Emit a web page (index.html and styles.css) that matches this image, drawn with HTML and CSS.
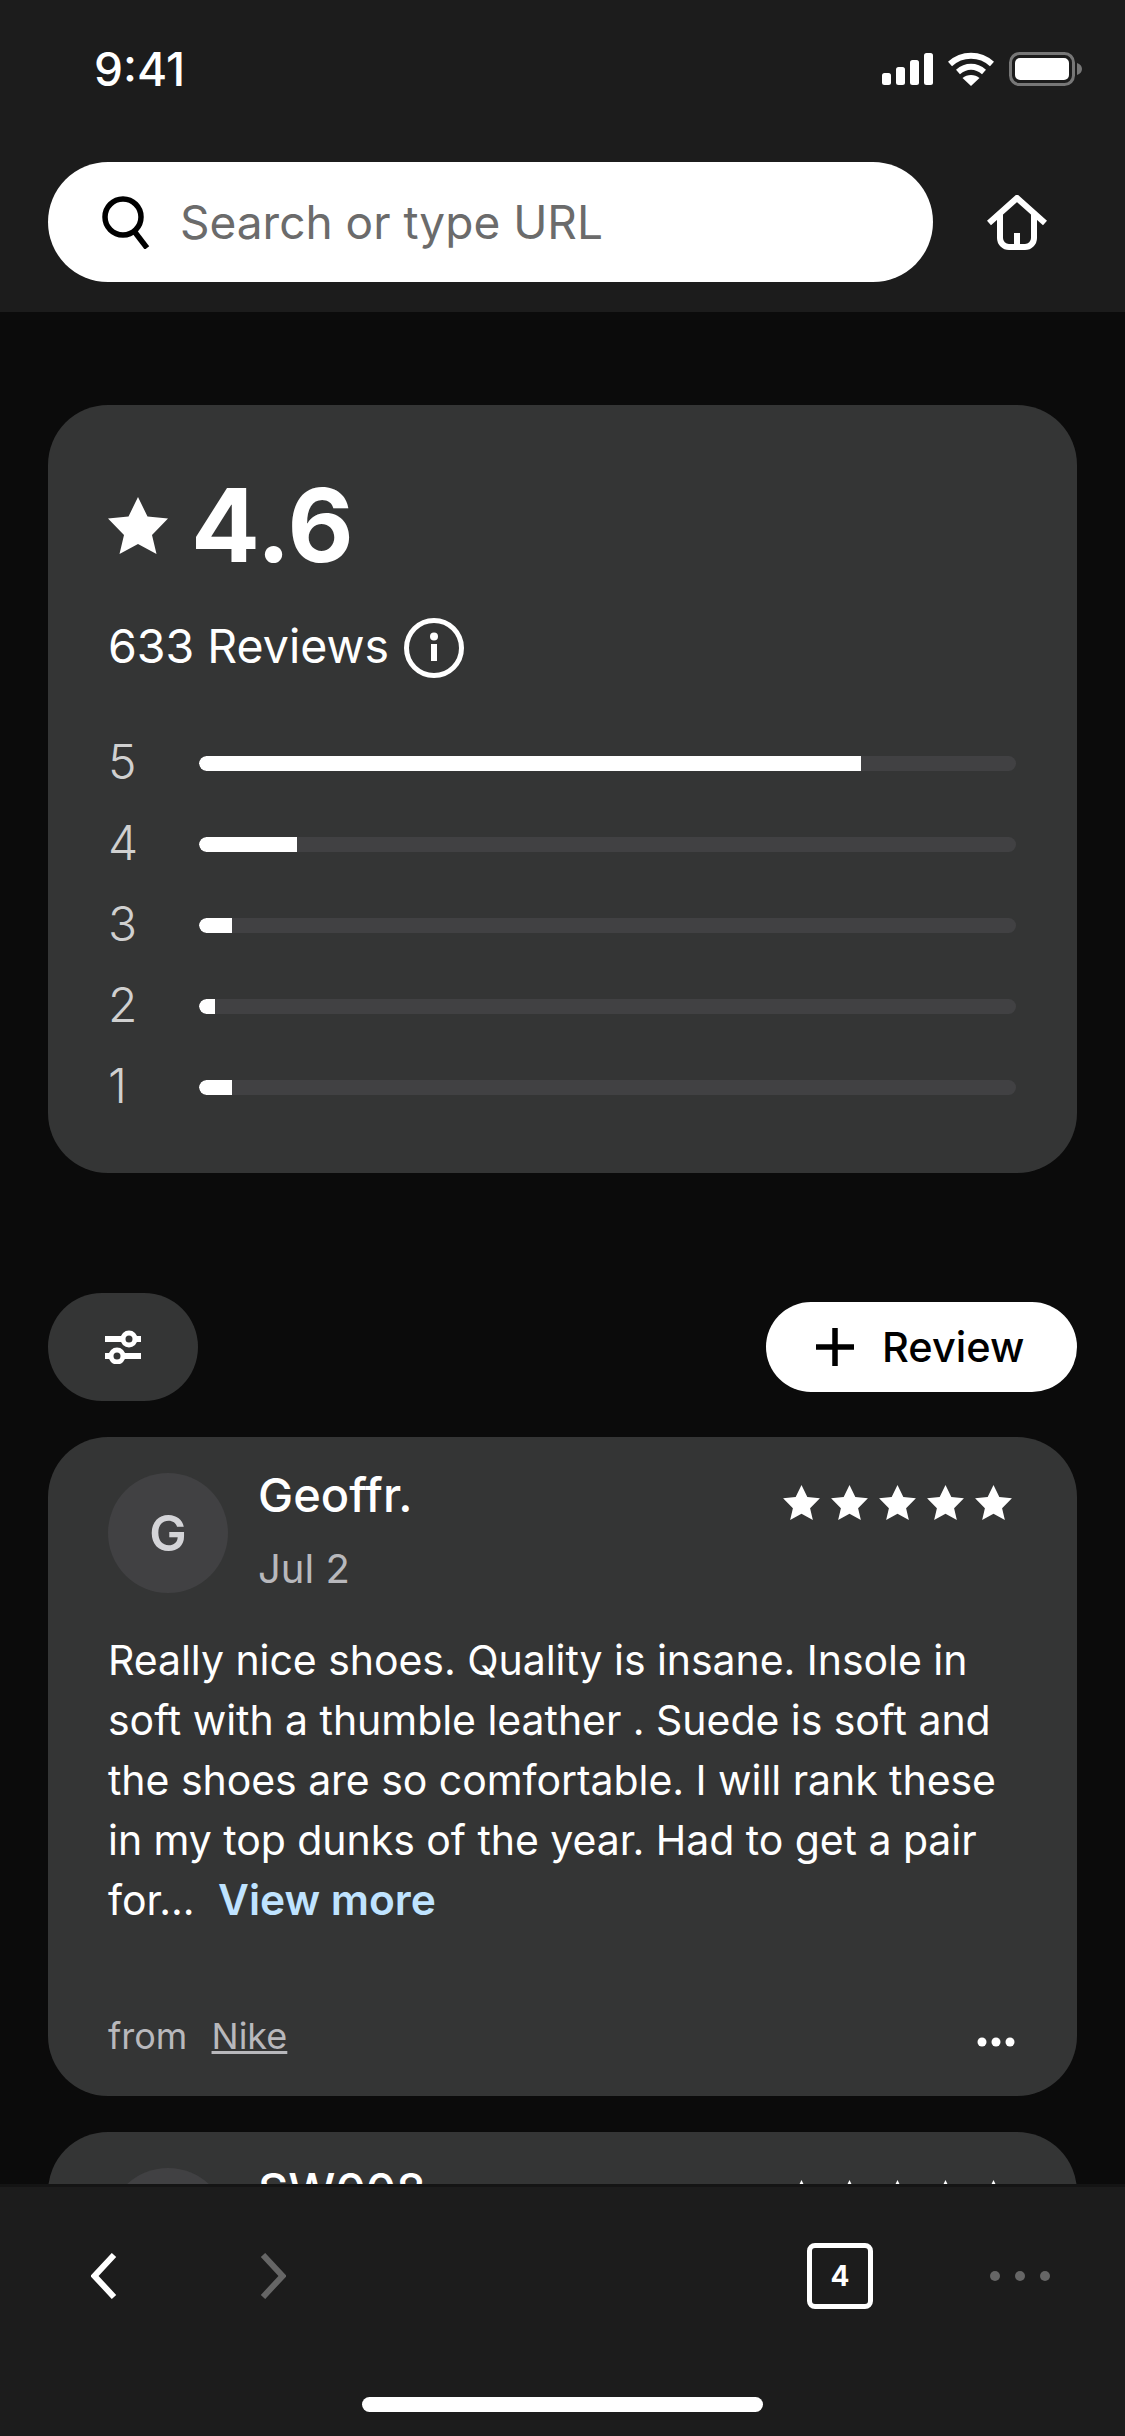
FILE: index.html
```html
<!DOCTYPE html>
<html lang="en">
<head>
    <meta charset="UTF-8">
    <meta name="viewport" content="width=device-width, initial-scale=1.0">
    <title>Reviews</title>
    <link rel="stylesheet" href="styles.css">
</head>
<body>
    <svg class="defs">
        <symbol id="star" viewBox="0 0 60 57">
            <path d="M30 0L39.5 19.5L60 21.5L44 38L48.5 57L30 47L11.5 57L16 38L0 21.5L20.5 19.5Z" fill="#fff"/>
        </symbol>
    </svg>

    <header class="top-bar">
        <div class="status-bar">
            <span class="time">9:41</span>
            <div class="status-icons">
                <svg width="51" height="32" viewBox="0 0 51 32" fill="#fff">
                    <rect x="0" y="20" width="9" height="12" rx="2.5"/>
                    <rect x="14" y="14" width="9" height="18" rx="2.5"/>
                    <rect x="28" y="7" width="9" height="25" rx="2.5"/>
                    <rect x="42" y="0" width="9" height="32" rx="2.5"/>
                </svg>
                <svg width="46" height="34" viewBox="0 0 46 34" fill="none" stroke="#fff" stroke-width="6">
                    <path d="M2 12C14 1 32 1 44 12"/>
                    <path d="M10 20C18 13 28 13 36 20"/>
                    <path d="M23 34L14.5 26C19 22 27 22 31.5 26Z" fill="#fff" stroke="none"/>
                </svg>
                <svg width="73" height="34" viewBox="0 0 73 34">
                    <rect x="1.5" y="1.5" width="63" height="31" rx="9" fill="none" stroke="#777" stroke-width="3"/>
                    <rect x="6" y="6" width="54" height="22" rx="5" fill="#fff"/>
                    <path d="M68 11C71 12 73 14 73 17C73 20 71 22 68 23Z" fill="#777"/>
                </svg>
            </div>
        </div>
        <div class="search-row">
            <div class="search-box">
                <svg width="48" height="53" viewBox="0 0 48 53" fill="none" stroke="#000" stroke-width="5.5">
                    <circle cx="21" cy="21" r="18"/>
                    <path d="M32 35L45 52"/>
                </svg>
                <span>Search or type URL</span>
            </div>
            <svg width="60" height="55" viewBox="0 0 60 55" fill="none" stroke="#fff" stroke-width="6">
                <path d="M2 28L30 3L58 28"/>
                <path d="M13 18V43A9 9 0 0 0 22 52H38A9 9 0 0 0 47 43V18"/>
                <path d="M30 38V52"/>
            </svg>
        </div>
    </header>

    <main class="content">
        <section class="summary">
            <div class="score">
                <svg class="score-star"><use href="#star"/></svg>
                <span>4.6</span>
            </div>
            <div class="count">
                <span>633 Reviews</span>
                <svg width="60" height="60" viewBox="0 0 60 60">
                    <circle cx="30" cy="30" r="27.5" fill="none" stroke="#fff" stroke-width="5"/>
                    <circle cx="30" cy="18.5" r="4" fill="#fff"/>
                    <rect x="27" y="26" width="6" height="17" fill="#fff"/>
                </svg>
            </div>
            <div class="bars">
                <div class="bar-row"><span>5</span><div class="track"><div class="fill" style="width: 81%"></div></div></div>
                <div class="bar-row"><span>4</span><div class="track"><div class="fill" style="width: 12%"></div></div></div>
                <div class="bar-row"><span>3</span><div class="track"><div class="fill" style="width: 4%"></div></div></div>
                <div class="bar-row"><span>2</span><div class="track"><div class="fill" style="width: 2%"></div></div></div>
                <div class="bar-row"><span>1</span><div class="track"><div class="fill" style="width: 4%"></div></div></div>
            </div>
        </section>

        <div class="toolbar">
            <button class="filter-button">
                <svg width="36" height="34" viewBox="0 0 36 34" fill="none" stroke="#fff">
                    <path d="M0 9H36M0 26H36" stroke-width="6"/>
                    <circle cx="24" cy="9" r="6" fill="#343535" stroke-width="5"/>
                    <circle cx="12" cy="26" r="6" fill="#343535" stroke-width="5"/>
                </svg>
            </button>
            <button class="review-button">
                <svg width="38" height="38" viewBox="0 0 38 38" fill="none" stroke="#000" stroke-width="5.5">
                    <path d="M19 0V38M0 19H38"/>
                </svg>
                <span>Review</span>
            </button>
        </div>

        <article class="review">
            <div class="review-head">
                <div class="avatar">G</div>
                <div class="author">
                    <div class="name">Geoffr.</div>
                    <div class="date">Jul 2</div>
                </div>
                <div class="stars">
                    <svg><use href="#star"/></svg>
                    <svg><use href="#star"/></svg>
                    <svg><use href="#star"/></svg>
                    <svg><use href="#star"/></svg>
                    <svg><use href="#star"/></svg>
                </div>
            </div>
            <p class="review-text">Really nice shoes. Quality is insane. Insole in<br>soft with a thumble leather . Suede is soft and<br>the shoes are so comfortable. I will rank these<br>in my top dunks of the year. Had to get a pair<br>for... <a class="view-more">View more</a></p>
            <div class="review-foot">
                <span class="source">from <a>Nike</a></span>
                <svg class="more-dots" width="38" height="10" viewBox="0 0 38 10" fill="#fff">
                    <circle cx="5" cy="5" r="4.5"/>
                    <circle cx="19" cy="5" r="4.5"/>
                    <circle cx="33" cy="5" r="4.5"/>
                </svg>
            </div>
        </article>

        <article class="review">
            <div class="review-head">
                <div class="avatar">S</div>
                <div class="author">
                    <div class="name">SW008</div>
                    <div class="date">Jul 1</div>
                </div>
                <div class="stars">
                    <svg><use href="#star"/></svg>
                    <svg><use href="#star"/></svg>
                    <svg><use href="#star"/></svg>
                    <svg><use href="#star"/></svg>
                    <svg><use href="#star"/></svg>
                </div>
            </div>
        </article>
    </main>

    <footer class="bottom-bar">
        <nav class="nav-row">
            <div class="nav-arrows">
                <svg width="26" height="46" viewBox="0 0 26 46" fill="none" stroke="#fff" stroke-width="6">
                    <path d="M23 2L3.5 23L23 44"/>
                </svg>
                <svg width="26" height="46" viewBox="0 0 26 46" fill="none" stroke="#666" stroke-width="6">
                    <path d="M3 2L22.5 23L3 44"/>
                </svg>
            </div>
            <div class="nav-right">
                <div class="tab-count">4</div>
                <svg width="60" height="12" viewBox="0 0 60 12" fill="#666">
                    <circle cx="5" cy="6" r="5"/>
                    <circle cx="30" cy="6" r="5"/>
                    <circle cx="55" cy="6" r="5"/>
                </svg>
            </div>
        </nav>
        <div class="home-indicator"></div>
    </footer>
</body>
</html>
```

FILE: styles.css
```css
body {
    font-family: 'Inter', 'Liberation Sans', sans-serif;
    background-color: #0b0b0b;
    color: white;
    display: flex;
    flex-direction: column;
    width: 1125px;
    height: 2436px;
    margin: 0;
    overflow: hidden;
}
svg {
    display: block;
    flex-shrink: 0;
}
.defs {
    width: 0;
    height: 0;
    position: absolute;
}

/* top bar */
.top-bar {
    background-color: #1c1c1c;
    height: 312px;
    flex-shrink: 0;
}
.status-bar {
    display: flex;
    align-items: center;
    justify-content: space-between;
    height: 34px;
    padding: 52px 43px 0 94px;
}
.time {
    font-size: 46px;
    font-weight: 500;
}
.status-icons {
    display: flex;
    align-items: center;
    gap: 15px;
}
.search-row {
    display: flex;
    align-items: center;
    justify-content: space-between;
    margin-top: 76px;
    padding: 0 78px 0 48px;
}
.search-box {
    display: flex;
    align-items: center;
    gap: 30px;
    width: 885px;
    height: 120px;
    box-sizing: border-box;
    padding-left: 54px;
    background-color: #fff;
    border-radius: 60px;
    color: #6b6b6b;
    font-size: 46px;
}

/* page content */
.content {
    flex: 1;
    min-height: 0;
    overflow: hidden;
    padding: 93px 48px 0;
}
.summary {
    background-color: #343535;
    border-radius: 60px;
    padding: 65px 61px 61px 60px;
}
.score {
    display: flex;
    align-items: center;
    gap: 23px;
    height: 110px;
    font-size: 102px;
    font-weight: 700;
}
.score-star {
    width: 60px;
    height: 57px;
}
.count {
    display: flex;
    align-items: center;
    gap: 15px;
    margin-top: 38px;
    font-size: 46.5px;
}
.count span {
    padding-bottom: 4px;
}
.bars {
    display: flex;
    flex-direction: column;
    gap: 31px;
    margin-top: 60px;
}
.bar-row {
    display: flex;
    align-items: center;
    height: 50px;
    font-size: 48px;
    font-weight: 300;
    color: #d0d0d0;
}
.bar-row span {
    width: 91px;
    padding-bottom: 3px;
}
.track {
    flex: 1;
    height: 15px;
    background-color: #414143;
    border-radius: 8px;
    overflow: hidden;
}
.fill {
    height: 100%;
    background-color: #fff;
    border-radius: 8px 0 0 8px;
}

.toolbar {
    display: flex;
    align-items: center;
    justify-content: space-between;
    margin-top: 120px;
}
.filter-button {
    display: flex;
    align-items: center;
    justify-content: center;
    width: 150px;
    height: 108px;
    background-color: #343535;
    border: none;
    border-radius: 54px;
    padding: 0;
}
.review-button {
    display: flex;
    align-items: center;
    gap: 28px;
    width: 311px;
    height: 90px;
    box-sizing: border-box;
    padding: 0 0 0 50px;
    background-color: #fff;
    border: none;
    border-radius: 45px;
    color: #000;
    font-family: inherit;
    font-size: 41.5px;
    font-weight: 500;
}

.review {
    background-color: #343535;
    border-radius: 60px;
    margin-top: 36px;
    padding: 36px 65px 35px 60px;
}
.review-head {
    display: flex;
    align-items: flex-start;
}
.avatar {
    display: flex;
    align-items: center;
    justify-content: center;
    width: 120px;
    height: 120px;
    background-color: #414143;
    border-radius: 50%;
    color: #d4d4d8;
    font-size: 50px;
    font-weight: 600;
}
.author {
    flex: 1;
    margin: -8px 0 0 30px;
}
.name {
    font-size: 47px;
    font-weight: 500;
    line-height: 60px;
}
.date {
    margin-top: 14px;
    color: #b8b8bc;
    font-size: 40px;
    line-height: 60px;
}
.stars {
    display: flex;
    gap: 11px;
    margin-top: 12px;
}
.stars svg {
    width: 37px;
    height: 35px;
}
.review-text {
    margin: 31px -20px 0 0;
    font-size: 41px;
    letter-spacing: -0.05px;
    line-height: 60px;
}
.view-more {
    margin-left: 12px;
    color: #bfe3ff;
    font-size: 42.5px;
    font-weight: 600;
}
.review-foot {
    display: flex;
    align-items: center;
    justify-content: space-between;
    height: 50px;
    margin-top: 81px;
}
.source {
    color: #b8b8bc;
    font-size: 36px;
}
.source a {
    margin-left: 14px;
    text-decoration: underline;
}
.more-dots {
    margin: 12px -3px 0 0;
}

/* bottom bar */
.bottom-bar {
    background-color: #1c1c1c;
    border-top: 3px solid #141414;
    box-sizing: border-box;
    height: 252px;
    flex-shrink: 0;
}
.nav-row {
    display: flex;
    align-items: center;
    justify-content: space-between;
    height: 66px;
    margin-top: 56px;
    padding: 0 75px 0 91px;
}
.nav-arrows {
    display: flex;
    align-items: center;
    gap: 143px;
}
.nav-right {
    display: flex;
    align-items: center;
    gap: 117px;
}
.tab-count {
    display: flex;
    align-items: center;
    justify-content: center;
    width: 66px;
    height: 66px;
    box-sizing: border-box;
    border: 5px solid #fff;
    border-radius: 8px;
    font-size: 28px;
    font-weight: 700;
}
.home-indicator {
    width: 401px;
    height: 15px;
    margin: 88px auto 0;
    background-color: #fff;
    border-radius: 8px;
}
```
